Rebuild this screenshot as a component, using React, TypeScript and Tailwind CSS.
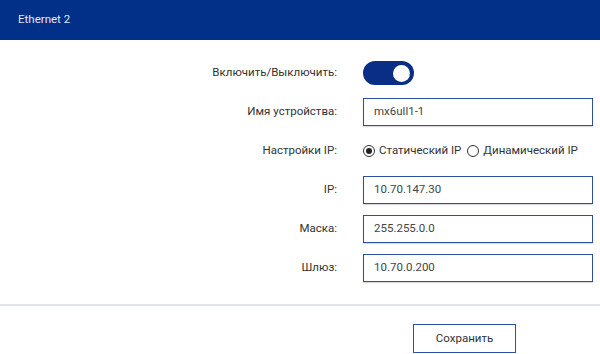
import React from "react";

const font = { fontFamily: 'Roboto, "Noto Sans", sans-serif' };

function Row({ label, children }: { label: string; children: React.ReactNode }) {
  return (
    <div className="flex items-center h-[28px]">
      <div className="w-[337px] text-right text-[11.5px] text-[#333]">{label}</div>
      <div className="ml-[26px] flex items-center">{children}</div>
    </div>
  );
}

function Field({ value }: { value: string }) {
  return (
    <div className="w-[230px] h-[28px] border border-[#2f4f9f] shadow-[0_1px_1px_rgba(0,0,0,0.15)] flex items-center pl-[10px] text-[11.5px] text-[#444]">
      {value}
    </div>
  );
}

function Radio({ checked, label }: { checked: boolean; label: string }) {
  return (
    <div className="flex items-center gap-[4px]">
      <div className="w-[12px] h-[12px] rounded-full border border-[#333] flex items-center justify-center">
        {checked && <div className="w-[6px] h-[6px] rounded-full bg-[#222]" />}
      </div>
      <span className="text-[11.5px] text-[#333]">{label}</span>
    </div>
  );
}

export default function App() {
  return (
    <div className="w-[600px] h-[354px] bg-white overflow-hidden" style={font}>
      <div className="h-[40px] bg-[#022f88] flex items-center pl-[18px] text-[11.5px] text-[#e3e8f3]">
        Ethernet 2
      </div>
      <div className="pt-[19px] flex flex-col gap-[11px]">
        <Row label="Включить/Выключить:">
          <div className="w-[51px] h-[24px] rounded-full bg-[#0a2e86] flex items-center justify-end pr-[4px]">
            <div className="w-[17px] h-[17px] rounded-full bg-white" />
          </div>
        </Row>
        <Row label="Имя устройства:">
          <Field value="mx6ull1-1" />
        </Row>
        <Row label="Настройки IP:">
          <div className="flex items-center gap-[6px]">
            <Radio checked label="Статический IP" />
            <Radio checked={false} label="Динамический IP" />
          </div>
        </Row>
        <Row label="IP:">
          <Field value="10.70.147.30" />
        </Row>
        <Row label="Маска:">
          <Field value="255.255.0.0" />
        </Row>
        <Row label="Шлюз:">
          <Field value="10.70.0.200" />
        </Row>
      </div>
      <div className="mt-[22px] h-[2px] bg-[#e1e4ea]" />
      <div className="flex justify-end pr-[84px] pt-[18px]">
        <button className="w-[103px] h-[29px] border border-[#2f4f9f] bg-white text-[11.5px] text-[#333]">
          Сохранить
        </button>
      </div>
    </div>
  );
}
